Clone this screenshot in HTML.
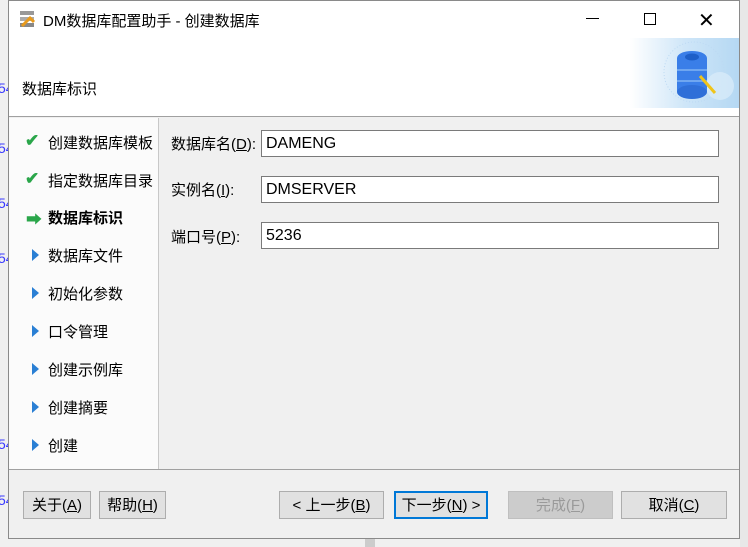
<!DOCTYPE html>
<html><head><meta charset="utf-8"><style>
*{margin:0;padding:0;box-sizing:border-box}
body{width:748px;height:547px;background:#f0f0f0;position:relative;overflow:hidden;font-family:"Liberation Sans","Noto Sans CJK SC",sans-serif;font-size:15px;color:#000}
.a{position:absolute}
.win{left:8px;top:0;width:732px;height:539px;border:1px solid #8a8a8a;background:#f0f0f0}
.bl{color:#3a3aff;font-size:14px;left:-2px}
.nav{left:9px;top:118px;width:150px;height:352px;background:#fbfbfb;border-right:1px solid #c8c8c8}
.it{position:absolute;left:39px;font-size:15px}
.tri{position:absolute;left:24px;width:0;height:0;border-top:6px solid transparent;border-bottom:6px solid transparent;border-left:7px solid #2a7fd4}
.lab{left:171px;font-size:15px}
.inp{left:261px;width:458px;height:27px;background:#fff;border:1px solid #7a7a7a;padding:4px 4px 0;font-size:16px}
.btn{top:491px;height:28px;border:1px solid #adadad;background:#e1e1e1;text-align:center;line-height:27px;font-size:15px}
u{text-decoration:underline}
</style></head><body>
<div class="a bl" style="top:80px">54</div>
<div class="a bl" style="top:140px">54</div>
<div class="a bl" style="top:195px">54</div>
<div class="a bl" style="top:250px">54</div>
<div class="a bl" style="top:436px">54</div>
<div class="a bl" style="top:492px">54</div>
<div class="a" style="left:740px;top:0;width:8px;height:547px;background:#e8e8e8"></div>
<div class="a" style="left:365px;top:539px;width:10px;height:8px;background:#ccc"></div>
<div class="win a">
</div>
<div class="a" style="left:9px;top:1px;width:730px;height:116px;background:#fff;border-bottom:1px solid #a0a0a0"></div>
<svg class="a" style="left:18px;top:9px" width="20" height="20"><rect x="2" y="2" width="14" height="4" fill="#999"/><rect x="2" y="8" width="14" height="4" fill="#aaa"/><rect x="2" y="14" width="14" height="4" fill="#888"/><path d="M4 17 L12 9 L16 13" stroke="#e89a1c" stroke-width="3" fill="none"/></svg>
<div class="a" style="left:43px;top:10px;font-size:15px">DM数据库配置助手 - 创建数据库</div>
<div class="a" style="left:586px;top:18px;width:13px;height:1px;background:#000"></div>
<div class="a" style="left:644px;top:13px;width:12px;height:12px;border:1px solid #000"></div>
<div class="a" style="left:698px;top:8px;font-size:20px;font-weight:300">✕</div>
<div class="a" style="left:22px;top:78px;font-size:15px">数据库标识</div>
<div class="a" style="left:630px;top:38px;width:109px;height:70px;background:linear-gradient(90deg,#fff,#cfe6f8 50%,#b5d8f3)"></div>
<svg class="a" style="left:660px;top:40px" width="80" height="66"><circle cx="34" cy="32" r="30" fill="none" stroke="#bcd9f3" stroke-dasharray="1 2"/><circle cx="60" cy="46" r="14" fill="#dcecf9" opacity=".7"/><ellipse cx="32" cy="18" rx="15" ry="7" fill="#3a7ee8"/><rect x="17" y="18" width="30" height="34" fill="#3a7ee8"/><ellipse cx="32" cy="52" rx="15" ry="7" fill="#2f6fd8"/><ellipse cx="32" cy="17" rx="7" ry="3.5" fill="#1e5fc8"/><path d="M17 30h30M17 41h30" stroke="#6fa6f0" stroke-width="2"/><path d="M40 36 L55 53" stroke="#f0c419" stroke-width="3"/></svg>
<div class="nav a"></div>
<div class="a" style="left:9px;top:469px;width:730px;height:1px;background:#a0a0a0"></div>
<div class="a" style="left:25px;top:131px;color:#2aa64a;font-size:17px;font-weight:bold">✔</div>
<div class="it" style="left:48px;top:132px">创建数据库模板</div>
<div class="a" style="left:25px;top:169px;color:#2aa64a;font-size:17px;font-weight:bold">✔</div>
<div class="it" style="left:48px;top:170px">指定数据库目录</div>
<div class="a" style="left:26px;top:206px;color:#2aa64a;font-size:16px;font-weight:bold">➡</div>
<div class="it" style="left:48px;top:207px;font-weight:bold">数据库标识</div>
<div class="tri" style="left:32px;top:249px"></div><div class="it" style="left:48px;top:245px">数据库文件</div>
<div class="tri" style="left:32px;top:287px"></div><div class="it" style="left:48px;top:283px">初始化参数</div>
<div class="tri" style="left:32px;top:325px"></div><div class="it" style="left:48px;top:321px">口令管理</div>
<div class="tri" style="left:32px;top:363px"></div><div class="it" style="left:48px;top:359px">创建示例库</div>
<div class="tri" style="left:32px;top:401px"></div><div class="it" style="left:48px;top:397px">创建摘要</div>
<div class="tri" style="left:32px;top:439px"></div><div class="it" style="left:48px;top:435px">创建</div>
<div class="a lab" style="top:133px">数据库名(<u>D</u>):</div>
<div class="a inp" style="top:130px">DAMENG</div>
<div class="a lab" style="top:179px">实例名(<u>I</u>):</div>
<div class="a inp" style="top:176px">DMSERVER</div>
<div class="a lab" style="top:226px">端口号(<u>P</u>):</div>
<div class="a inp" style="top:222px">5236</div>
<div class="a btn" style="left:23px;width:68px">关于(<u>A</u>)</div>
<div class="a btn" style="left:99px;width:67px">帮助(<u>H</u>)</div>
<div class="a btn" style="left:279px;width:105px">&lt; 上一步(<u>B</u>)</div>
<div class="a btn" style="left:394px;width:94px;border:2px solid #0078d7;line-height:25px">下一步(<u>N</u>) &gt;</div>
<div class="a btn" style="left:508px;width:105px;background:#cccccc;border-color:#bfbfbf;color:#9a9a9a">完成(<u>F</u>)</div>
<div class="a btn" style="left:621px;width:106px">取消(<u>C</u>)</div>
</body></html>
